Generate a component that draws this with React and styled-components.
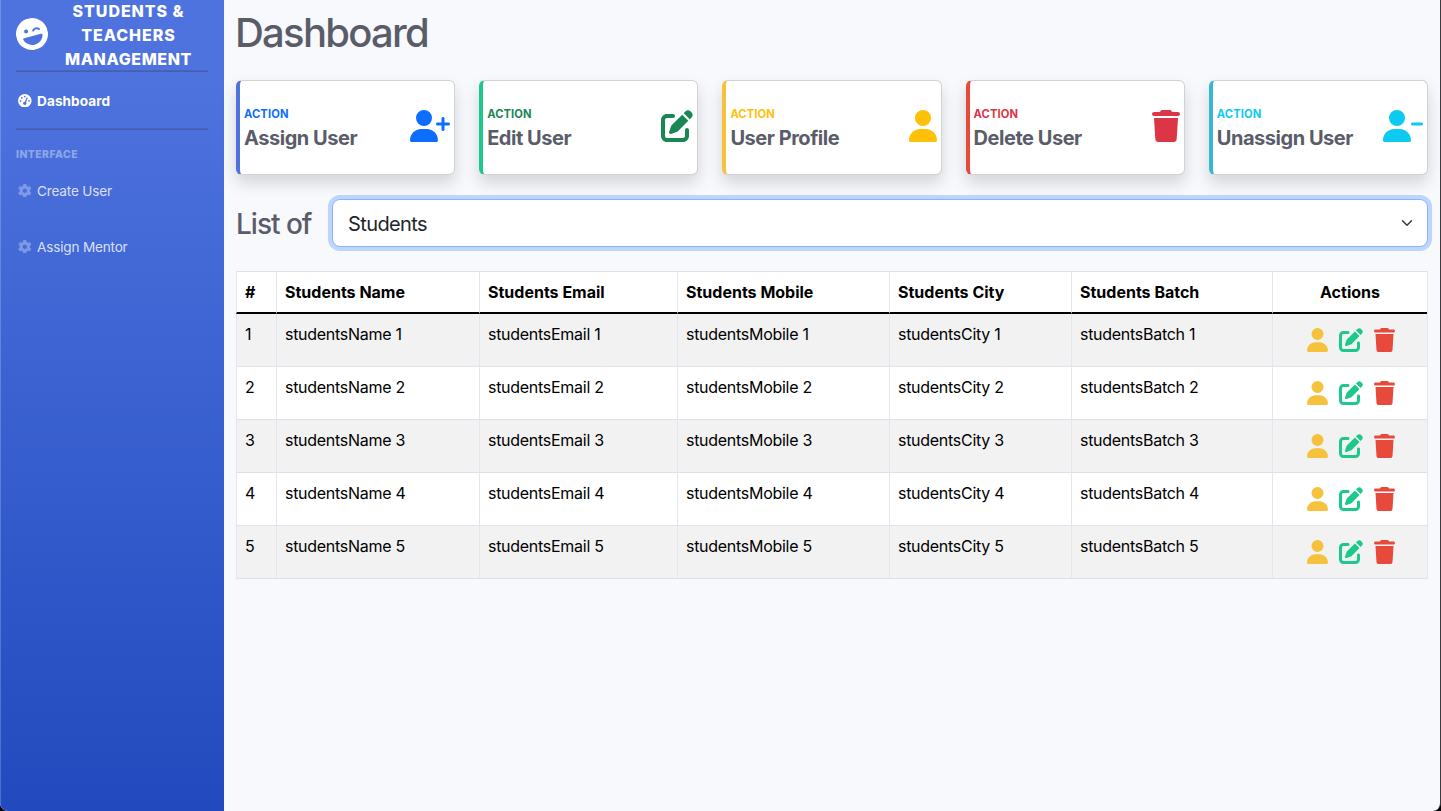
import React from "react";
import styled, { createGlobalStyle } from "styled-components";
import {
  FaUserPlus,
  FaPenToSquare,
  FaUser,
  FaTrash,
  FaUserMinus,
  FaFaceLaughWink,
  FaGaugeHigh,
  FaGear,
} from "react-icons/fa6";

const GlobalStyle = createGlobalStyle`
  *, *::before, *::after { box-sizing: border-box; }
  body {
    margin: 0;
    background: #000;
    font-family: Inter, "Liberation Sans", sans-serif;
    font-size: 16px;
    line-height: 1.5;
    overflow: hidden;
  }
  svg { display: block; flex: none; }
`;

const Shell = styled.div`
  display: flex;
  height: 811px;
  background: #f8f9fc;
  border-right: 1px solid #3a3b3e;
  border-radius: 0 0 8px 8px;
  overflow: hidden;
`;

const Sidebar = styled.nav`
  width: 224px;
  flex: none;
  padding: 0 16px 0 15px;
  border-left: 1px solid rgba(255, 255, 255, 0.2);
  background: linear-gradient(180deg, #4e73df 10%, #224abe 100%);
  background-origin: border-box;
  color: #fff;
`;

const Brand = styled.div`
  display: flex;
  align-items: center;
  height: 70px;

  svg { transform: translateY(-1px) rotate(-15deg); }
`;

const BrandText = styled.div`
  flex: 1;
  margin-top: -1px;
  text-align: center;
  text-transform: uppercase;
  font-weight: 800;
  line-height: 24px;
`;

const BrandLine = styled.div`
  padding-left: 1px;
  letter-spacing: ${(p) => p.$track};
`;

const Rule = styled.div`
  height: 2px;
  background: linear-gradient(#4a69c3, #425ca9);
`;

const NavItem = styled.a`
  display: flex;
  align-items: center;
  gap: 5.5px;
  height: 56px;
  padding: 1px 0 0 2px;
  font-size: 13.6px;
  font-weight: ${(p) => (p.$active ? 700 : 400)};
  letter-spacing: ${(p) => (p.$active ? "0.05px" : "-0.2px")};
  color: ${(p) => (p.$active ? "#fff" : "rgba(255,255,255,.8)")};

  svg { color: ${(p) => (p.$active ? "#fff" : "rgba(255,255,255,.3)")}; }
  span { padding-top: 2px; }
`;

const NavHeading = styled.div`
  margin-top: 17px;
  margin-bottom: -1px;
  font-size: 10.4px;
  line-height: 16px;
  font-weight: 800;
  letter-spacing: 0.45px;
  text-transform: uppercase;
  color: rgba(255, 255, 255, 0.4);
`;

const Main = styled.main`
  flex: 1;
  min-width: 0;
  padding: 9px 12px;
`;

const PageTitle = styled.h1`
  margin: 0 0 23px -1px;
  font-size: 40px;
  line-height: 48px;
  font-weight: 500;
  letter-spacing: -1.75px;
  color: #5a5c69;
`;

const CardRow = styled.div`
  display: grid;
  grid-template-columns: repeat(5, 1fr);
  gap: 24px;
`;

const Card = styled.div`
  display: flex;
  align-items: center;
  justify-content: space-between;
  height: 95px;
  padding: 0 4px;
  border: 1px solid rgba(0, 0, 0, 0.175);
  border-left: 4px solid ${(p) => p.$edge};
  border-radius: 6px;
  background: #fff;
  box-shadow: 0 8px 16px rgba(0, 0, 0, 0.15);
  color: ${(p) => p.$tone};

  > svg {
    width: ${(p) => p.$iconWidth}px;
    height: 32px;
    margin-top: -3px;
  }
`;

const CardLabel = styled.div`
  padding-top: 1px;
  font-size: 11.2px;
  line-height: 17px;
  font-weight: 700;
  letter-spacing: 0.1px;
  text-transform: uppercase;
  margin-bottom: 3px;
`;

const CardTitle = styled.div`
  padding-bottom: 1px;
  font-size: 20px;
  line-height: 24px;
  font-weight: 700;
  letter-spacing: -0.47px;
  color: #5a5c69;
  white-space: nowrap;
`;

const Filter = styled.div`
  display: flex;
  align-items: center;
  margin: 24px 0;
`;

const FilterLabel = styled.h3`
  width: 96px;
  margin: 0;
  padding-top: 2px;
  font-size: 28px;
  line-height: 34px;
  font-weight: 500;
  letter-spacing: -1px;
  color: #5a5c69;
`;

const SelectBox = styled.div`
  flex: 1;
  display: flex;
  align-items: center;
  justify-content: space-between;
  height: 48px;
  padding: 0 12px 0 15px;
  border: 1px solid #86b7fe;
  border-radius: 8px;
  background: #fff;
  box-shadow: 0 0 0 4px rgba(13, 110, 253, 0.25);
  font-size: 20px;
  letter-spacing: -0.6px;
  color: #212529;

  span { padding-top: 2px; }
`;

const Table = styled.table`
  width: 100%;
  table-layout: fixed;
  border-spacing: 0;
  border-top: 1px solid #dee2e6;
  border-right: 1px solid #e3e6f0;
  background: #fff;
  color: #000;
`;

const HeadCell = styled.th`
  height: 42px;
  padding: 8px;
  line-height: 24px;
  border-left: 1px solid #e3e6f0;
  border-bottom: 2px solid #000;
  font-weight: 700;
  letter-spacing: 0;
  text-align: ${(p) => (p.$center ? "center" : "left")};
`;

const Cell = styled.td`
  height: 53px;
  padding: 8px;
  vertical-align: top;
  border-left: 1px solid #e3e6f0;
  border-bottom: 1px solid #dee2e6;
  letter-spacing: -0.28px;
`;

const BodyRow = styled.tr`
  background: ${(p) => (p.$striped ? "#f2f2f2" : "#fff")};
`;

const Actions = styled.div`
  display: flex;
  justify-content: center;
  gap: 11px;
  padding: 6px 0 0 1px;

  svg { height: 24px; }
`;

const ProfileIcon = styled(FaUser)`
  width: 21px;
  color: #f6c23e;
`;

const EditIcon = styled(FaPenToSquare)`
  width: 24px;
  color: #1cc88a;
`;

const DeleteIcon = styled(FaTrash)`
  width: 21px;
  color: #e74a3b;
`;

const cards = [
  { title: "Assign User", edge: "#4e73df", tone: "#0d6efd", Icon: FaUserPlus, w: 40 },
  { title: "Edit User", edge: "#1cc88a", tone: "#198754", Icon: FaPenToSquare, w: 32 },
  { title: "User Profile", edge: "#f6c23e", tone: "#ffc107", Icon: FaUser, w: 28 },
  { title: "Delete User", edge: "#e74a3b", tone: "#dc3545", Icon: FaTrash, w: 28 },
  { title: "Unassign User", edge: "#36b9cc", tone: "#0dcaf0", Icon: FaUserMinus, w: 40 },
];

const fields = ["Name", "Email", "Mobile", "City", "Batch"];
const columnWidths = [40, 203, 198, 212, 182, 201, 155];

export default function App() {
  return (
    <>
      <GlobalStyle />
      <Shell>
        <Sidebar>
          <Brand>
            <FaFaceLaughWink size={32} />
            <BrandText>
              <BrandLine $track="0.95px">Students &amp;</BrandLine>
              <BrandLine $track="0.95px">Teachers</BrandLine>
              <BrandLine $track="0.6px">Management</BrandLine>
            </BrandText>
          </Brand>
          <Rule />
          <NavItem $active>
            <FaGaugeHigh size={13.6} />
            <span>Dashboard</span>
          </NavItem>
          <Rule />
          <NavHeading>Interface</NavHeading>
          <NavItem>
            <FaGear size={13.6} />
            <span>Create User</span>
          </NavItem>
          <NavItem>
            <FaGear size={13.6} />
            <span>Assign Mentor</span>
          </NavItem>
        </Sidebar>
        <Main>
          <PageTitle>Dashboard</PageTitle>
          <CardRow>
            {cards.map(({ title, edge, tone, Icon, w }) => (
              <Card key={title} $edge={edge} $tone={tone} $iconWidth={w}>
                <div>
                  <CardLabel>Action</CardLabel>
                  <CardTitle>{title}</CardTitle>
                </div>
                <Icon />
              </Card>
            ))}
          </CardRow>
          <Filter>
            <FilterLabel>List of</FilterLabel>
            <SelectBox>
              <span>Students</span>
              <svg width="16" height="12" viewBox="0 0 16 16" fill="none">
                <path
                  d="m2 5 6 6 6-6"
                  stroke="#343a40"
                  strokeWidth="2"
                  strokeLinecap="round"
                  strokeLinejoin="round"
                />
              </svg>
            </SelectBox>
          </Filter>
          <Table>
            <colgroup>
              {columnWidths.map((w, i) => (
                <col key={i} width={w} />
              ))}
            </colgroup>
            <thead>
              <tr>
                <HeadCell>#</HeadCell>
                {fields.map((f) => (
                  <HeadCell key={f}>Students {f}</HeadCell>
                ))}
                <HeadCell $center>Actions</HeadCell>
              </tr>
            </thead>
            <tbody>
              {[1, 2, 3, 4, 5].map((n) => (
                <BodyRow key={n} $striped={n % 2 === 1}>
                  <Cell>{n}</Cell>
                  {fields.map((f) => (
                    <Cell key={f}>
                      students{f} {n}
                    </Cell>
                  ))}
                  <Cell>
                    <Actions>
                      <ProfileIcon />
                      <EditIcon />
                      <DeleteIcon />
                    </Actions>
                  </Cell>
                </BodyRow>
              ))}
            </tbody>
          </Table>
        </Main>
      </Shell>
    </>
  );
}
